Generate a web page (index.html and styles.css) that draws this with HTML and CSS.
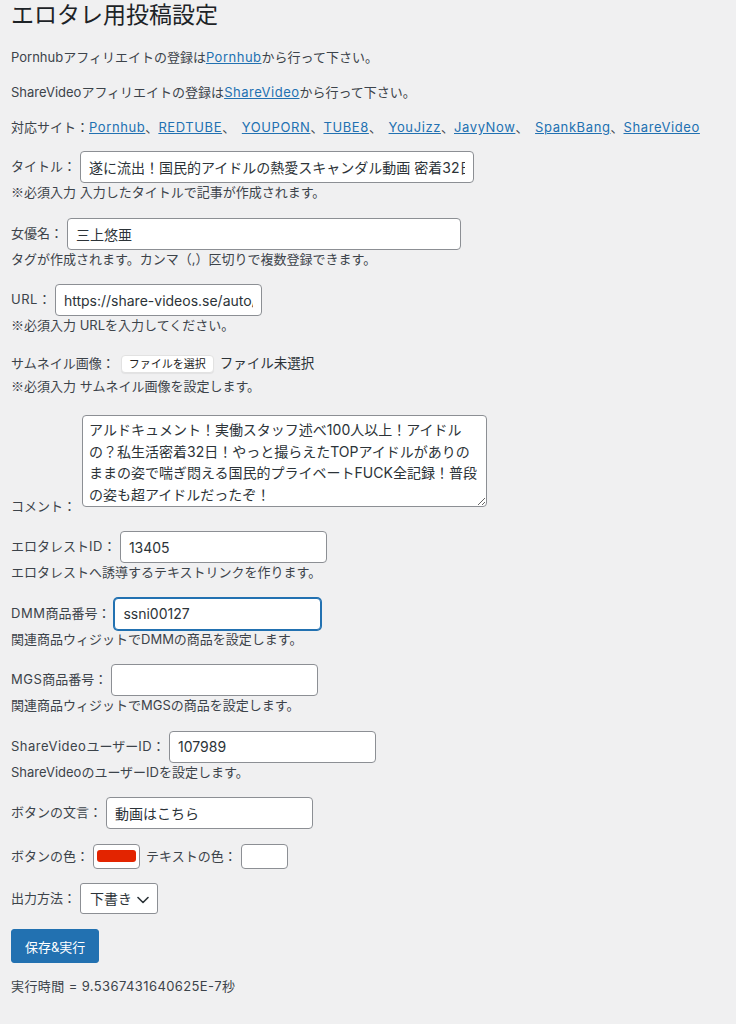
FILE: index.html
```html
<!DOCTYPE html>
<html lang="ja">
<head>
  <meta charset="UTF-8">
  <meta name="viewport" content="width=device-width, initial-scale=1.0">
  <title>エロタレ用投稿設定</title>
  <link rel="stylesheet" href="styles.css">
</head>
<body>
  <div class="wrap">
    <h1>エロタレ用投稿設定</h1>

    <div class="intro">
      <p>Pornhubアフィリエイトの登録は<a href="#">Pornhub</a>から行って下さい。</p>
      <p>ShareVideoアフィリエイトの登録は<a href="#">ShareVideo</a>から行って下さい。</p>
      <p class="sites">対応サイト：<a href="#">Pornhub</a>、<a href="#">REDTUBE</a>、 <a href="#">YOUPORN</a>、<a href="#">TUBE8</a>、 <a href="#">YouJizz</a>、<a href="#">JavyNow</a>、 <a href="#">SpankBang</a>、<a href="#">ShareVideo</a></p>
    </div>

    <form>
      <div class="field">
        <div class="row">
          <label>タイトル：</label>
          <input class="text wide" type="text" value="遂に流出！国民的アイドルの熱愛スキャンダル動画 密着32日">
        </div>
        <div class="note"><span class="jp">※</span>必須入力 入力したタイトルで記事が作成されます。</div>
      </div>

      <div class="field">
        <div class="row">
          <label>女優名：</label>
          <input class="text wide" type="text" value="三上悠亜">
        </div>
        <div class="note">タグが作成されます。カンマ（,）区切りで複数登録できます。</div>
      </div>

      <div class="field">
        <div class="row">
          <label><span class="en">URL</span>：</label>
          <input class="text" type="text" value="https://share-videos.se/auto/video/107989">
        </div>
        <div class="note"><span class="jp">※</span>必須入力 URLを入力してください。</div>
      </div>

      <div class="field">
        <div class="row file-row">
          <label>サムネイル画像：</label>
          <span class="file-btn">ファイルを選択</span>
          <span class="file-name">ファイル未選択</span>
        </div>
        <div class="note"><span class="jp">※</span>必須入力 サムネイル画像を設定します。</div>
      </div>

      <div class="field comment">
        <div class="row bottom">
          <label>コメント：</label>
          <textarea>アルドキュメント！実働スタッフ述べ100人以上！アイドル
の？私生活密着32日！やっと撮らえたTOPアイドルがありの
ままの姿で喘ぎ悶える国民的プライベートFUCK全記録！普段
の姿も超アイドルだったぞ！</textarea>
        </div>
      </div>

      <div class="field">
        <div class="row">
          <label>エロタレスト<span class="en">ID</span>：</label>
          <input class="text" type="text" value="13405">
        </div>
        <div class="note">エロタレストへ誘導するテキストリンクを作ります。</div>
      </div>

      <div class="field">
        <div class="row">
          <label><span class="en">DMM</span>商品番号：</label>
          <input class="text focused" type="text" value="ssni00127">
        </div>
        <div class="note">関連商品ウィジットでDMMの商品を設定します。</div>
      </div>

      <div class="field">
        <div class="row">
          <label><span class="en">MGS</span>商品番号：</label>
          <input class="text" type="text" value="">
        </div>
        <div class="note">関連商品ウィジットでMGSの商品を設定します。</div>
      </div>

      <div class="field">
        <div class="row">
          <label><span class="en">ShareVideo</span>ユーザー<span class="en">ID</span>：</label>
          <input class="text" type="text" value="107989">
        </div>
        <div class="note">ShareVideoのユーザーIDを設定します。</div>
      </div>

      <div class="field">
        <div class="row">
          <label>ボタンの文言：</label>
          <input class="text" type="text" value="動画はこちら">
        </div>
      </div>

      <div class="field tight">
        <div class="row">
          <label>ボタンの色：</label>
          <input class="color" type="color" value="#e32400">
          <label class="after">テキストの色：</label>
          <input class="color" type="color" value="#ffffff">
        </div>
      </div>

      <div class="field">
        <div class="row">
          <label>出力方法：</label>
          <span class="select-wrap">
            <select>
              <option>下書き</option>
              <option>公開</option>
            </select>
            <svg class="chevron" width="12" height="8" viewBox="0 0 12 8">
              <path d="M1 1.5 L6 6.5 L11 1.5" fill="none" stroke="#2c3338" stroke-width="1.6" stroke-linecap="round" stroke-linejoin="round"/>
            </svg>
          </span>
        </div>
      </div>

      <button class="button-primary" type="button">保存&amp;実行</button>
    </form>

    <p class="result">実行時間 = 9.5367431640625E-7秒</p>
  </div>
</body>
</html>
```

FILE: styles.css
```css
* {
  margin: 0;
  padding: 0;
  box-sizing: border-box;
}

body {
  background: #f0f0f1;
  color: #3c434a;
  font-family: "Inter", "Noto Sans CJK JP", sans-serif;
  font-size: 13px;
  line-height: 1.5;
}

a {
  color: #2271b1;
  text-decoration: underline;
  letter-spacing: 0.5px;
}

.jp {
  font-family: "Noto Sans CJK JP", sans-serif;
  line-height: 1;
}

.en {
  letter-spacing: 0.5px;
}

.wrap {
  padding: 0 11px;
}

h1 {
  font-size: 23px;
  font-weight: 400;
  line-height: 30px;
  color: #1d2327;
}

.intro {
  margin: 17px 0 14px;
}

.intro p {
  line-height: 20px;
  margin-bottom: 15px;
}

.intro p:last-child {
  margin-bottom: 0;
}

.intro .sites {
  word-spacing: 3px;
}

.intro .sites a {
  letter-spacing: 0.6px;
}

.field {
  margin-bottom: 15px;
}

.field.tight {
  margin-bottom: 14px;
}

.field.comment {
  margin-top: 19px;
  margin-bottom: 24px;
}

.row {
  display: flex;
  align-items: center;
  gap: 4px;
}

.row.bottom {
  align-items: flex-end;
}

.row.bottom label {
  margin-bottom: -9px;
}

.note {
  height: 19.5px;
  line-height: 19.5px;
}

input.text {
  width: 207px;
  height: 32px;
  padding: 0 8px;
  border: 1px solid #8c8f94;
  border-radius: 4px;
  background: #fff;
  color: #2c3338;
  font-family: inherit;
  font-size: 14px;
  outline: none;
}

input.text.wide {
  width: 394px;
}

input.text.focused {
  border-color: #2271b1;
  box-shadow: 0 0 0 1px #2271b1;
}

.file-row {
  height: 26px;
}

.file-btn {
  display: inline-block;
  height: 18px;
  padding: 0 7px;
  margin-left: 2px;
  line-height: 17px;
  font-size: 11px;
  color: #222;
  background: #fff;
  border: 1px solid #e2e2e2;
  border-radius: 4px;
  box-shadow: 0 1px 1px rgba(0,0,0,0.06);
}

.file-name {
  font-size: 13.5px;
  color: #2c3338;
  margin-left: 2px;
}

textarea {
  width: 405px;
  height: 92px;
  margin-left: 2px;
  padding: 3px 6px;
  border: 1px solid #8c8f94;
  border-radius: 4px;
  background: #fff;
  color: #2c3338;
  font-family: inherit;
  font-size: 14px;
  line-height: 21.7px;
  overflow: hidden;
  outline: none;
}

input.color {
  -webkit-appearance: none;
  appearance: none;
  width: 47px;
  height: 25px;
  padding: 0;
  border: 1px solid #8c8f94;
  border-radius: 4px;
  background: #fff;
  cursor: pointer;
}

input.color::-webkit-color-swatch-wrapper {
  padding: 5px 3px 6px 3px;
}

input.color::-webkit-color-swatch {
  border: none;
  border-radius: 3px;
}

.row .after {
  margin-left: 2px;
}

.select-wrap {
  position: relative;
  display: inline-block;
}

select {
  -webkit-appearance: none;
  appearance: none;
  display: block;
  width: 78px;
  height: 31px;
  padding: 0 24px 0 9px;
  border: 1px solid #8c8f94;
  border-radius: 3px;
  background: #fff;
  color: #2c3338;
  font-family: inherit;
  font-size: 14px;
  outline: none;
}

.chevron {
  position: absolute;
  right: 9px;
  top: 13px;
  pointer-events: none;
}

.button-primary {
  display: block;
  height: 34px;
  padding: 0 13px;
  background: #2271b1;
  border: 1px solid #2271b1;
  border-radius: 3px;
  color: #fff;
  font-family: inherit;
  font-size: 13px;
  cursor: pointer;
}

.result {
  margin-top: 14px;
  line-height: 19.5px;
  letter-spacing: 0.4px;
}
```
